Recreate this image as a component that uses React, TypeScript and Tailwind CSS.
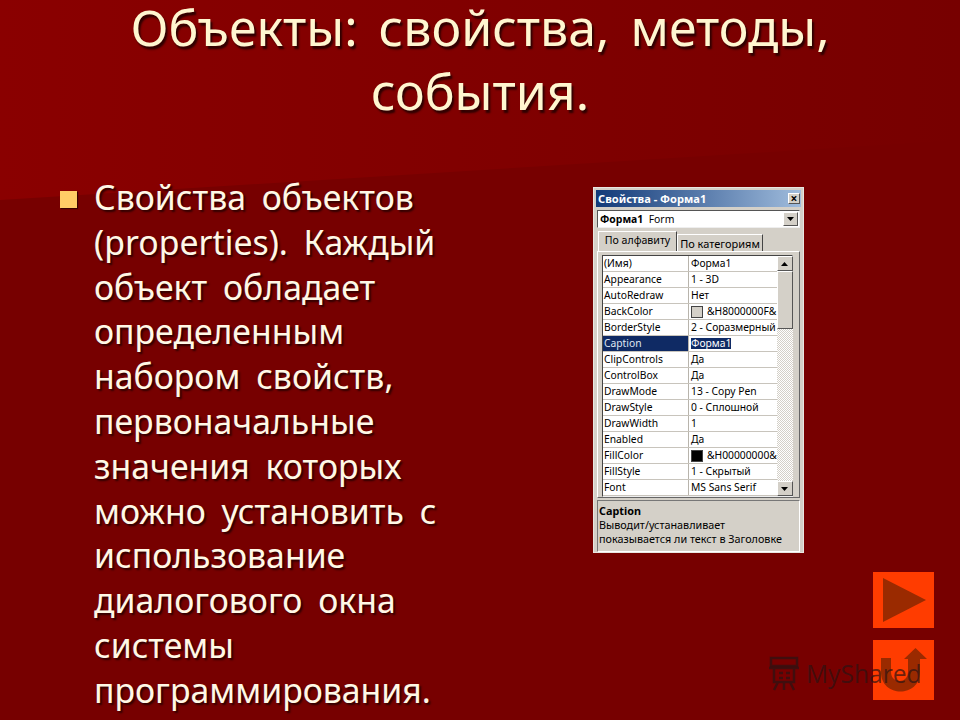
const rows: [string, string, string?][] = [
  ["(Имя)", "Форма1"],
  ["Appearance", "1 - 3D"],
  ["AutoRedraw", "Нет"],
  ["BackColor", "&H8000000F&", "#d4d0c8"],
  ["BorderStyle", "2 - Соразмерный"],
  ["Caption", "Форма1"],
  ["ClipControls", "Да"],
  ["ControlBox", "Да"],
  ["DrawMode", "13 - Copy Pen"],
  ["DrawStyle", "0 - Сплошной"],
  ["DrawWidth", "1"],
  ["Enabled", "Да"],
  ["FillColor", "&H00000000&", "#000000"],
  ["FillStyle", "1 - Скрытый"],
  ["Font", "MS Sans Serif"],
];

const bodyLines = [
  "Свойства объектов",
  "(properties). Каждый",
  "объект обладает",
  "определенным",
  "набором свойств,",
  "первоначальные",
  "значения которых",
  "можно установить с",
  "использование",
  "диалогового окна",
  "системы",
  "программирования.",
];

const raised = "border border-t-white border-l-white border-r-[#555] border-b-[#555]";

function PropertiesWindow() {
  return (
    <div className="w-[211px] h-[366px] bg-[#d4d0c8] border border-[#e8e6e0] flex flex-col text-[10.3px] leading-none text-black font-['Noto_Sans',sans-serif] p-[2px]">
      <div className="h-[17px] shrink-0 bg-gradient-to-r from-[#123a78] to-[#a0bcdc] text-white font-bold text-[11.1px] flex items-center justify-between pl-[2px] pr-[1px]">
        <span>Свойства - Форма1</span>
        <span className={`w-[12px] h-[11px] bg-[#d4d0c8] text-black text-[12px] flex items-center justify-center ${raised}`}>×</span>
      </div>
      <div className="h-[18px] shrink-0 mt-[3px] mx-[1px] bg-white border border-t-[#555] border-l-[#555] border-r-[#eee] border-b-[#eee] flex items-center justify-between pl-[2px]">
        <span className="text-[10.4px]"><b>Форма1</b>&nbsp; Form</span>
        <span className={`w-[15px] h-[14px] mr-[1px] bg-[#d4d0c8] flex items-center justify-center ${raised}`}>
          <svg width="7" height="4" viewBox="0 0 7 4"><path d="M0 0h7L3.500 4z" fill="#000" /></svg>
        </span>
      </div>
      <div className="h-[20px] shrink-0 mt-[3px] flex items-end pl-[2px]">
        <div className="h-[20px] w-[79px] border border-b-0 border-t-white border-l-white border-r-[#444] flex items-center justify-center text-[10.6px] pb-[2px]">По алфавиту</div>
        <div className="h-[17px] w-[86px] border border-b-0 border-t-white border-l-white border-r-[#444] flex items-center justify-center text-[11px]">По категориям</div>
      </div>
      <div className="flex-1 mx-[1px] border border-t-white border-l-white border-r-[#666] border-b-[#666] pt-[3px] pl-[4px] pr-[6px]">
        <div className="flex border border-t-[#444] border-l-[#444] border-r-[#eee] border-b-[#eee] bg-white">
          <div className="w-[175px]">
            {rows.map(([name, value, swatch]) => {
              const selected = name === "Caption";
              return (
                <div key={name} className="flex h-[16px] border-b border-[#c8c4bc]">
                  <div className={`w-[86px] pl-[1px] flex items-center border-r border-[#b8b4ac] ${selected ? "bg-[#0f2a64] text-[#dfe6f2]" : ""}`}>{name}</div>
                  <div className="flex-1 pl-[2px] flex items-center whitespace-nowrap overflow-hidden">
                    {swatch && <span className="w-[12px] h-[12px] mr-[4px] border border-[#444] shrink-0" style={{ background: swatch }} />}
                    <span className={selected ? "bg-[#0f2a64] text-white" : ""}>{value}</span>
                  </div>
                </div>
              );
            })}
          </div>
          <div className="w-[16px] flex flex-col bg-[repeating-conic-gradient(#d4d0c8_0_25%,#ffffff_0_50%)] bg-[length:2px_2px]">
            <span className={`h-[15px] w-[16px] bg-[#d4d0c8] flex items-center justify-center ${raised}`}>
              <svg width="7" height="4" viewBox="0 0 7 4"><path d="M0 4h7L3.500 0z" fill="#000" /></svg>
            </span>
            <span className={`h-[58px] w-[16px] bg-[#d4d0c8] ${raised}`} />
            <span className="flex-1" />
            <span className={`h-[15px] w-[16px] bg-[#d4d0c8] flex items-center justify-center ${raised}`}>
              <svg width="7" height="4" viewBox="0 0 7 4"><path d="M0 0h7L3.500 4z" fill="#000" /></svg>
            </span>
          </div>
        </div>
      </div>
      <div className="h-[52px] shrink-0 mt-[2px] mx-[1px] border border-t-[#777] border-l-[#777] border-r-white border-b-white pl-[1px] pt-[3px] text-[10.8px] leading-[14px]">
        <div className="font-bold">Caption</div>
        <div>Выводит/устанавливает</div>
        <div className="whitespace-nowrap">показывается ли текст в Заголовке</div>
      </div>
    </div>
  );
}

export default function App() {
  return (
    <div className="relative w-[960px] h-[720px] overflow-hidden bg-[#770000] font-['Noto_Sans',sans-serif]">
      <svg className="absolute inset-0" width="960" height="720" viewBox="0 0 960 720">
        <defs>
          <linearGradient id="wedge" x1="0" y1="0" x2="1" y2="0">
            <stop offset="0" stopColor="#8a0000" />
            <stop offset="1" stopColor="#770000" />
          </linearGradient>
        </defs>
        <path d="M0 0H960V140L0 200z" fill="url(#wedge)" />
      </svg>
      <div className="relative h-full flex flex-col">
        <h1 className="h-[175px] shrink-0 -mt-[5px] mb-[5px] text-center text-[50px] leading-[64px] [word-spacing:8px] text-[#fff6d0] [text-shadow:2px_3px_2px_#2e0000]">
          Объекты: свойства, методы,<br />события.
        </h1>
        <div className="flex flex-1 pl-[60px]">
          <div className="w-[533px] flex items-start">
            <span className="w-[17px] h-[17px] mt-[16px] shrink-0 bg-[#ffcc66] shadow-[1px_1px_1px_#3a0000]" />
            <div className="ml-[17px] text-[33.8px] leading-[44.8px] [word-spacing:7px] text-[#fff8e6] whitespace-nowrap [text-shadow:2px_2px_2px_#2e0000]">
              {bodyLines.map((l) => <div key={l}>{l}</div>)}
            </div>
          </div>
          <div className="w-[341px] pt-[12px] flex flex-col">
            <PropertiesWindow />
            <div className="self-end mt-[19px] flex flex-col gap-[12px]">
              <div className="w-[61px] h-[56px] bg-[#ff3c00] flex items-center justify-center">
                <svg width="44" height="44" viewBox="0 0 44 44"><path d="M1 0 L44 22 L1 44z" fill="#9a2a00" /></svg>
              </div>
              <div className="w-[61px] h-[60px] bg-[#ff3c00] flex items-center justify-center">
                <svg width="46" height="45" viewBox="0 0 46 45"><path d="M0 10H10V24C10 36 27 36 27 24V11H23L34.500 0L46 11H39V24C39 50 0 50 0 24Z" fill="#9a2a00" /></svg>
              </div>
            </div>
          </div>
        </div>
      </div>
      <div className="absolute left-[768px] top-[656px] flex items-center gap-[6px] text-[#2a1414]/70 text-[24.6px] leading-none font-['Open_Sans',sans-serif]">
        <svg width="32" height="36" viewBox="0 0 32 36" fill="none" stroke="currentColor" strokeWidth="2.500"><rect x="3" y="2" width="26" height="8" /><path d="M1 12h30M6 12v14h20V12M11 17h4M18 17h4M11 22h4M18 22h4M10 26l-4 8M22 26l4 8M16 26v8" /></svg>
        <span>MyShared</span>
      </div>
    </div>
  );
}
